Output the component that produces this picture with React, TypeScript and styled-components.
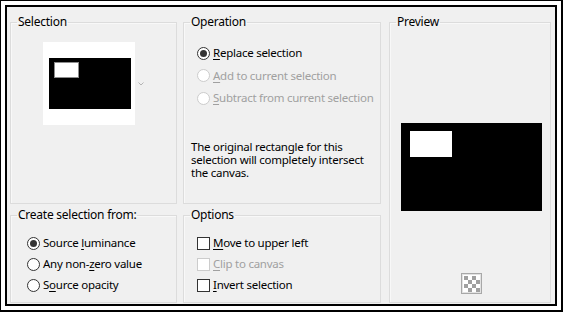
import React from 'react';
import styled, { createGlobalStyle } from 'styled-components';

const GlobalStyle = createGlobalStyle`
    html, body {
        margin: 0;
        padding: 0;
        background: #ffffff;
    }
    body {
        font-family: "Noto Sans", "Open Sans", sans-serif;
        font-size: 11.5px;
        letter-spacing: -0.25px;
        color: #000000;
    }
`;

type Choice = {
    label: React.ReactNode;
    checked?: boolean;
    disabled?: boolean;
};

const operations: Choice[] = [
    { label: <><u>R</u>eplace selection</>, checked: true },
    { label: <><u>A</u>dd to current selection</>, disabled: true },
    { label: <><u>S</u>ubtract from current selection</>, disabled: true },
];

const sources: Choice[] = [
    { label: <>Source <u>l</u>uminance</>, checked: true },
    { label: <>Any non-<u>z</u>ero value</> },
    { label: <>S<u>o</u>urce opacity</> },
];

const options: Choice[] = [
    { label: <><u>M</u>ove to upper left</> },
    { label: <><u>C</u>lip to canvas</>, disabled: true },
    { label: <><u>I</u>nvert selection</> },
];

const noteLines = ['The original rectangle for this', 'selection will completely intersect', 'the canvas.'];

const Checker = () => (
    <svg width="21" height="21" viewBox="0 0 21 21">
        <rect x="0.5" y="0.5" width="20" height="20" fill="#f4f4f4" stroke="#a8a8a8" />
        <rect x="1.5" y="1.5" width="18" height="18" fill="#ffffff" stroke="#e2e2e2" />
        {[0, 1, 2, 3].map((r) =>
            [0, 1, 2, 3].map((c) =>
                (r + c) % 2 === 0 ? (
                    <rect key={`${r}-${c}`} x={3 + c * 4} y={3 + r * 4} width="4" height="4" fill="#a0a0a0" />
                ) : null
            )
        )}
    </svg>
);

export default function App() {
    return (
        <>
            <GlobalStyle />
            <Frame>
                <Dialog>
                    <Group $area="sel">
                        <Legend>Selection</Legend>
                        <SelectionBody>
                            <Thumb>
                                <ThumbCanvas>
                                    <ThumbMark />
                                </ThumbCanvas>
                            </Thumb>
                            <svg width="6" height="4" viewBox="0 0 6 4">
                                <path d="M0.5 0.5 L3 3 L5.5 0.5" fill="none" stroke="#b4b4b4" strokeWidth="1" />
                            </svg>
                        </SelectionBody>
                    </Group>

                    <Group $area="op">
                        <Legend>Operation</Legend>
                        <OperationList>
                            {operations.map((o, i) => (
                                <OpRow key={i} $disabled={o.disabled}>
                                    <Radio $checked={o.checked} $disabled={o.disabled} />
                                    <span>{o.label}</span>
                                </OpRow>
                            ))}
                        </OperationList>
                        <Note>
                            {noteLines.map((line) => (
                                <NoteLine key={line}>{line}</NoteLine>
                            ))}
                        </Note>
                    </Group>

                    <Group $area="prev">
                        <Legend>Preview</Legend>
                        <PreviewBody>
                            <PreviewCanvas>
                                <PreviewMark />
                            </PreviewCanvas>
                            <CheckerSlot>
                                <Checker />
                            </CheckerSlot>
                        </PreviewBody>
                    </Group>

                    <Group $area="src">
                        <Legend>Create selection from:</Legend>
                        <ChoiceList $indent={16}>
                            {sources.map((o, i) => (
                                <Row key={i} $disabled={o.disabled}>
                                    <Radio $checked={o.checked} $disabled={o.disabled} />
                                    <span>{o.label}</span>
                                </Row>
                            ))}
                        </ChoiceList>
                    </Group>

                    <Group $area="opt">
                        <Legend>Options</Legend>
                        <ChoiceList $indent={13}>
                            {options.map((o, i) => (
                                <Row key={i} $disabled={o.disabled}>
                                    <Box $disabled={o.disabled} />
                                    <span>{o.label}</span>
                                </Row>
                            ))}
                        </ChoiceList>
                    </Group>
                </Dialog>
            </Frame>
        </>
    );
}

const Frame = styled.div`
    width: 563px;
    height: 312px;
    box-sizing: border-box;
    border-style: solid;
    border-color: #000000;
    border-width: 1px 2px 2px 1px;
    padding: 4px;
    background: #ffffff;
    display: flex;
`;

const Dialog = styled.div`
    flex: 1;
    border: 2px solid #000000;
    background: #f0f0f0;
    display: grid;
    grid-template-columns: 167px 198px 164px;
    grid-template-rows: 190px 96px;
    grid-template-areas:
        'sel op prev'
        'src opt prev';
    column-gap: 6px;
    row-gap: 3px;
    padding: 7px 0 0 3px;
    & > fieldset:nth-child(3) {
        margin-left: 2px;
    }
`;

const Group = styled.fieldset<{ $area: string }>`
    grid-area: ${(p) => p.$area};
    margin: 0;
    padding: 0;
    min-width: 0;
    border: 1px solid #dcdcdc;
    box-shadow: inset 1px 1px 0 #f8f8f8;
    display: flex;
    flex-direction: column;
`;

const Legend = styled.legend`
    margin-left: 6px;
    padding: 0 1px;
    font-size: 12px;
    line-height: 16px;
    color: #000000;
`;

const SelectionBody = styled.div`
    display: flex;
    align-items: center;
    gap: 3px;
    padding: 12px 0 0 32px;
`;

const Thumb = styled.div`
    width: 92px;
    height: 83px;
    background: #ffffff;
    box-sizing: border-box;
    padding: 16px 4px 16px 6px;
    display: flex;
`;

const ThumbCanvas = styled.div`
    flex: 1;
    background: #000000;
    padding: 4px 0 0 5px;
`;

const ThumbMark = styled.div`
    width: 25px;
    height: 16px;
    box-sizing: border-box;
    background: #ffffff;
    border: 1px solid #8c8c8c;
`;

const OperationList = styled.div`
    display: flex;
    flex-direction: column;
    padding: 12px 0 0 13px;
`;

const Row = styled.div<{ $disabled?: boolean }>`
    display: flex;
    align-items: center;
    gap: 3px;
    height: 21px;
    line-height: 16px;
    white-space: nowrap;
    color: ${(p) => (p.$disabled ? '#a0a0a0' : '#000000')};
    u {
        text-underline-offset: 2px;
    }
`;

const OpRow = styled(Row)`
    height: 22.5px;
`;

const Note = styled.div`
    display: flex;
    flex-direction: column;
    margin: 30px 0 0 7px;
`;

const NoteLine = styled.div`
    height: 13.3px;
    line-height: 13.3px;
    white-space: nowrap;
`;

const ChoiceList = styled.div<{ $indent: number }>`
    display: flex;
    flex-direction: column;
    padding: 9.5px 0 0 ${(p) => p.$indent}px;
`;

const Radio = styled.span<{ $checked?: boolean; $disabled?: boolean }>`
    position: relative;
    width: 13px;
    height: 13px;
    flex: none;
    box-sizing: border-box;
    border-radius: 50%;
    border: 1px solid ${(p) => (p.$disabled ? '#cccccc' : '#333333')};
    background: #ffffff;
    &::after {
        content: '';
        display: ${(p) => (p.$checked ? 'block' : 'none')};
        position: absolute;
        left: 2px;
        top: 2px;
        width: 7px;
        height: 7px;
        border-radius: 50%;
        background: #333333;
    }
`;

const Box = styled.span<{ $disabled?: boolean }>`
    width: 13px;
    height: 13px;
    flex: none;
    box-sizing: border-box;
    border: 1px solid ${(p) => (p.$disabled ? '#cccccc' : '#333333')};
    background: #ffffff;
`;

const PreviewBody = styled.div`
    flex: 1;
    display: flex;
    flex-direction: column;
    align-items: center;
    padding: 0 0 8px 3px;
`;

const PreviewCanvas = styled.div`
    margin-top: 93px;
    width: 141px;
    height: 88px;
    background: #000000;
    padding: 8px 0 0 9px;
    box-sizing: border-box;
`;

const PreviewMark = styled.div`
    width: 42px;
    height: 26px;
    background: #ffffff;
`;

const CheckerSlot = styled.div`
    margin-top: auto;
    display: flex;
`;
